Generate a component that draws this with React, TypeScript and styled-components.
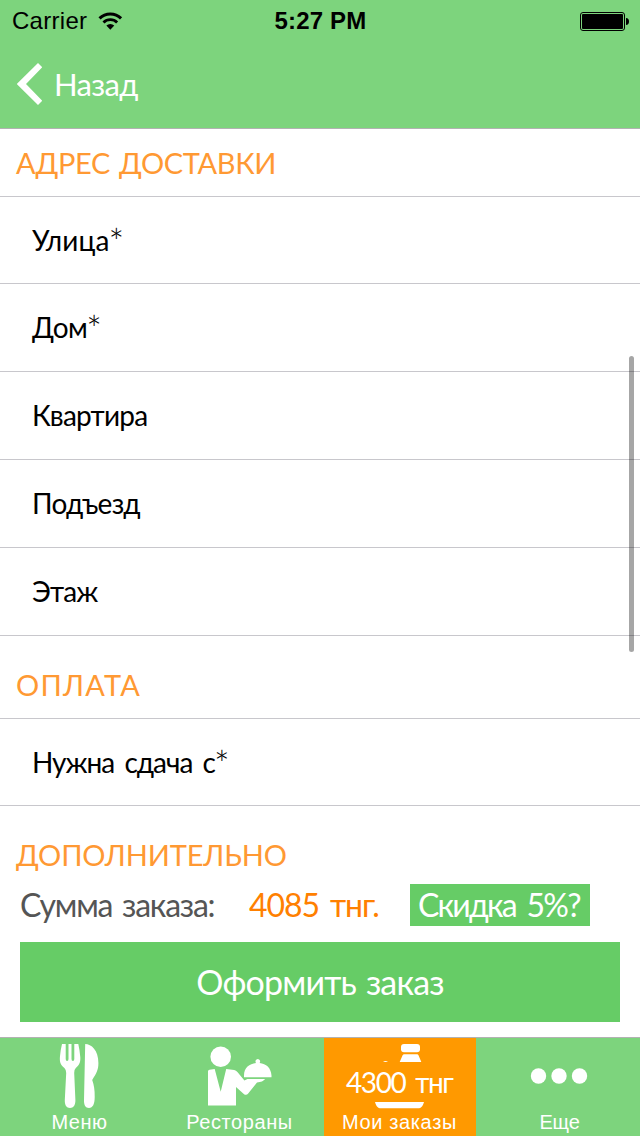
import React from 'react';
import styled, { createGlobalStyle } from 'styled-components';

const colors = {
  bar: '#7dd47d',
  accent: '#66cc66',
  heading: '#ff9933',
  price: '#ff8000',
  active: '#ff9900',
  line: '#c8c7cc',
  barLine: '#b2b2b2',
};

const GlobalStyle = createGlobalStyle`
  * { box-sizing: border-box; }
  body { margin: 0; background: #fff; }
`;

const Screen = styled.div`
  position: relative;
  display: flex;
  flex-direction: column;
  width: 640px;
  height: 1136px;
  overflow: hidden;
  background: #fff;
  color: #000;
  font-family: Lato, sans-serif;
`;

const Header = styled.header`
  height: 129px;
  flex: none;
  background: ${colors.bar};
  border-bottom: 1px solid ${colors.barLine};
`;

const StatusBar = styled.div`
  display: grid;
  grid-template-columns: 1fr auto 1fr;
  align-items: center;
  height: 40px;
  padding: 2px 11px 0 12px;
  font: 24px/38px 'Liberation Sans', Arial, sans-serif;
`;

const Carrier = styled.div`
  display: flex;
  align-items: center;
  gap: 11px;
  letter-spacing: 0.28px;
`;

const Clock = styled.div`
  font-weight: 700;
  letter-spacing: 0.15px;
`;

const Battery = styled.svg`
  justify-self: end;
`;

const BackButton = styled.button`
  display: flex;
  align-items: center;
  gap: 12px;
  height: 88px;
  padding: 0 0 0 17px;
  border: 0;
  background: none;
  color: #fff;
  font: 31px/40px Lato, sans-serif;
  letter-spacing: -0.7px;
`;

const Form = styled.main`
  display: flex;
  flex-direction: column;
  flex: 1;
`;

const Heading = styled.h2<{ $top: number; $bottom: number; $spacing: number }>`
  margin: 0;
  padding: ${p => p.$top}px 16px ${p => p.$bottom}px;
  color: ${colors.heading};
  font-size: 29px;
  font-weight: 400;
  line-height: 30px;
  letter-spacing: ${p => p.$spacing}px;
  word-spacing: 2px;
`;

const Fields = styled.div`
  border-top: 1px solid ${colors.line};
`;

const Field = styled.div<{ $spacing: number }>`
  height: 88px;
  padding-left: 32px;
  border-bottom: 1px solid ${colors.line};
  font-size: 28px;
  line-height: 87px;
  letter-spacing: ${p => p.$spacing}px;
  word-spacing: 4px;

  &:first-child {
    height: 87px;
    line-height: 86px;
  }
`;

const Required = styled.span`
  margin-left: -1px;
  font-size: 37px;
  font-weight: 300;
  line-height: 0;
  vertical-align: -5px;
`;

const Summary = styled.div`
  display: flex;
  height: 42px;
  padding: 0 50px 0 20px;
  font-size: 32px;
  line-height: 41px;
  white-space: nowrap;
`;

const SummaryLabel = styled.span`
  width: 229px;
  color: #555;
  letter-spacing: -1.25px;
  word-spacing: 3px;
`;

const Price = styled.span`
  width: 161px;
  color: ${colors.price};
  letter-spacing: -1.1px;
  word-spacing: 4px;
`;

const Discount = styled.span`
  flex: 1;
  padding-left: 8px;
  background: ${colors.accent};
  color: #fff;
  letter-spacing: -1.75px;
  word-spacing: 4px;
`;

const Submit = styled.button`
  height: 80px;
  margin: 16px 20px 0;
  padding: 0;
  border: 0;
  background: ${colors.accent};
  color: #fff;
  font: 34px/80px Lato, sans-serif;
  letter-spacing: -0.82px;
  word-spacing: 2px;
`;

const ScrollThumb = styled.div`
  position: absolute;
  top: 356px;
  right: 6px;
  width: 5px;
  height: 296px;
  border-radius: 3px;
  background: rgba(0, 0, 0, 0.35);
`;

const TabBar = styled.nav`
  display: flex;
  flex: none;
  height: 99px;
  border-top: 1px solid ${colors.barLine};
  background: ${colors.bar};
`;

const Tab = styled.div<{ $active?: boolean }>`
  position: relative;
  display: flex;
  flex-direction: column;
  align-items: center;
  width: ${p => (p.$active ? 152 : 160)}px;
  margin: 0 ${p => (p.$active ? 4 : 0)}px;
  background: ${p => (p.$active ? colors.active : 'transparent')};
  color: #fff;
`;

const TabIcon = styled.svg`
  flex: none;
  fill: #fff;
`;

const TabLabel = styled.span<{ $spacing: number }>`
  padding-right: 1px;
  font: 20px/24px 'Liberation Sans', Arial, sans-serif;
  letter-spacing: ${p => p.$spacing}px;
  white-space: nowrap;
`;

const CartTotal = styled.span`
  position: absolute;
  top: 24px;
  left: 22px;
  font-size: 28px;
  line-height: 40px;
  letter-spacing: -1.4px;
  word-spacing: 4px;
  white-space: nowrap;
`;

const addressFields = [
  { label: 'Улица', required: true, spacing: 0.1 },
  { label: 'Дом', required: true, spacing: -0.5 },
  { label: 'Квартира', spacing: -0.78 },
  { label: 'Подъезд', spacing: -0.75 },
  { label: 'Этаж', spacing: -0.9 },
];

export default function App() {
  return (
    <>
      <GlobalStyle />
      <Screen>
        <Header>
          <StatusBar>
            <Carrier>
              Carrier
              <svg width="25" height="20" viewBox="0 0 26 20" fill="none" stroke="#000">
                <path d="M1.6 7.2a16.1 16.1 0 0 1 22.4 0" strokeWidth="3.2" />
                <path d="M5.7 11.5a10.2 10.2 0 0 1 14.2 0" strokeWidth="3" />
                <path d="M12.8 19 8.7 14.7a6 6 0 0 1 8.2 0z" fill="#000" stroke="none" />
              </svg>
            </Carrier>
            <Clock>5:27 PM</Clock>
            <Battery width="49" height="19" viewBox="0 0 49 19">
              <rect x="0.5" y="0.5" width="44" height="18" rx="2.5" fill="none" stroke="#000" />
              <rect x="2" y="2" width="41" height="15" rx="1" />
              <path d="M46 6c2 0 3 1.5 3 3.5S48 13 46 13z" />
            </Battery>
          </StatusBar>
          <BackButton>
            <svg width="25" height="42" viewBox="0 0 25 42" fill="#fff">
              <path d="M21 0l4.300 4.300L9 21l16.300 16.700L21 42-.3 21z" />
            </svg>
            Назад
          </BackButton>
        </Header>

        <Form>
          <Heading $top={19} $bottom={18} $spacing={-0.36}>АДРЕС ДОСТАВКИ</Heading>
          <Fields>
            {addressFields.map(f => (
              <Field key={f.label} $spacing={f.spacing}>
                {f.label}
                {f.required && <Required>*</Required>}
              </Field>
            ))}
          </Fields>
          <Heading $top={34} $bottom={18} $spacing={1.2}>ОПЛАТА</Heading>
          <Fields>
            <Field $spacing={-1}>
              Нужна сдача с<Required>*</Required>
            </Field>
          </Fields>
          <Heading $top={34} $bottom={14} $spacing={-0.15}>ДОПОЛНИТЕЛЬНО</Heading>
          <Summary>
            <SummaryLabel>Сумма заказа:</SummaryLabel>
            <Price>4085 тнг.</Price>
            <Discount>Скидка 5%?</Discount>
          </Summary>
          <Submit>Оформить заказ</Submit>
        </Form>
        <ScrollThumb />

        <TabBar>
          <Tab>
            <TabIcon width="160" height="72" viewBox="0 0 160 72">
              <path d="M62 6h3.7v15q0 2 1.4 2t1.4-2V6h3v15q0 2 1.4 2t1.4-2V6h4q1.2 5 2 13c.4 6-1.500 8.500-4.500 11q-1.800 1.700-1.600 5l1.200 27c.1 5-1.900 8-5.400 8s-5.400-3-5.200-8l1.400-27q0-3.300-1.800-5c-3.200-2.500-4.900-5-4.500-11q.8-8 2.100-13z" />
              <path d="M85.200 6c6 0 13.200 6 13.200 19 0 7-1.900 10-6.200 17 1.800 5 2.600 10 2.500 17 0 7-1.900 11-5.700 11-3.500 0-5.200-3-5-8z" />
            </TabIcon>
            <TabLabel $spacing={0.48}>Меню</TabLabel>
          </Tab>
          <Tab>
            <TabIcon width="160" height="72" viewBox="0 0 160 72">
              <circle cx="60.700" cy="18.700" r="10.300" />
              <path d="M48 33.500q0-1.500 1.500-1.700l5.200-.7 6 22.700 5.500-22.700 8 .9q2 .3 3.200 2l7 8.500 3-1.500h17.800q-2.400 3-8.200 3.500L88.200 55.500q-2 2.500-4.400.4L76 49v18.500H48z" />
              <path d="M84 37.500C84 29.500 89.500 25.600 96 24.900q-.8-1-.4-2.400.7-1.600 2.200-1.600t2.200 1.600q.4 1.400-.4 2.400c6.500.7 11.400 4.700 11.900 12.600v1.700H84z" />
            </TabIcon>
            <TabLabel $spacing={0.6}>Рестораны</TabLabel>
          </Tab>
          <Tab $active>
            <TabIcon width="152" height="72" viewBox="0 0 152 72">
              <rect x="77" y="6" width="19" height="8.200" rx="3" />
              <path d="M80.200 16.300h12.900q1 0 1.400 1l2.800 6.700H75.700l2.900-6.700q.5-1 1.600-1zM59.500 23.500q2-1 4 0v.5h-4zM51 64h49c-1.200 4.400-2.900 6.300-6 6.300H57c-3.100 0-4.800-1.900-6-6.300z" />
            </TabIcon>
            <CartTotal>4300 тнг</CartTotal>
            <TabLabel $spacing={0.62}>Мои заказы</TabLabel>
          </Tab>
          <Tab>
            <TabIcon width="160" height="72" viewBox="0 0 160 72">
              <circle cx="58.500" cy="38" r="7.700" />
              <circle cx="79" cy="38" r="7.700" />
              <circle cx="99.500" cy="38" r="7.700" />
            </TabIcon>
            <TabLabel $spacing={-0.15}>Еще</TabLabel>
          </Tab>
        </TabBar>
      </Screen>
    </>
  );
}
